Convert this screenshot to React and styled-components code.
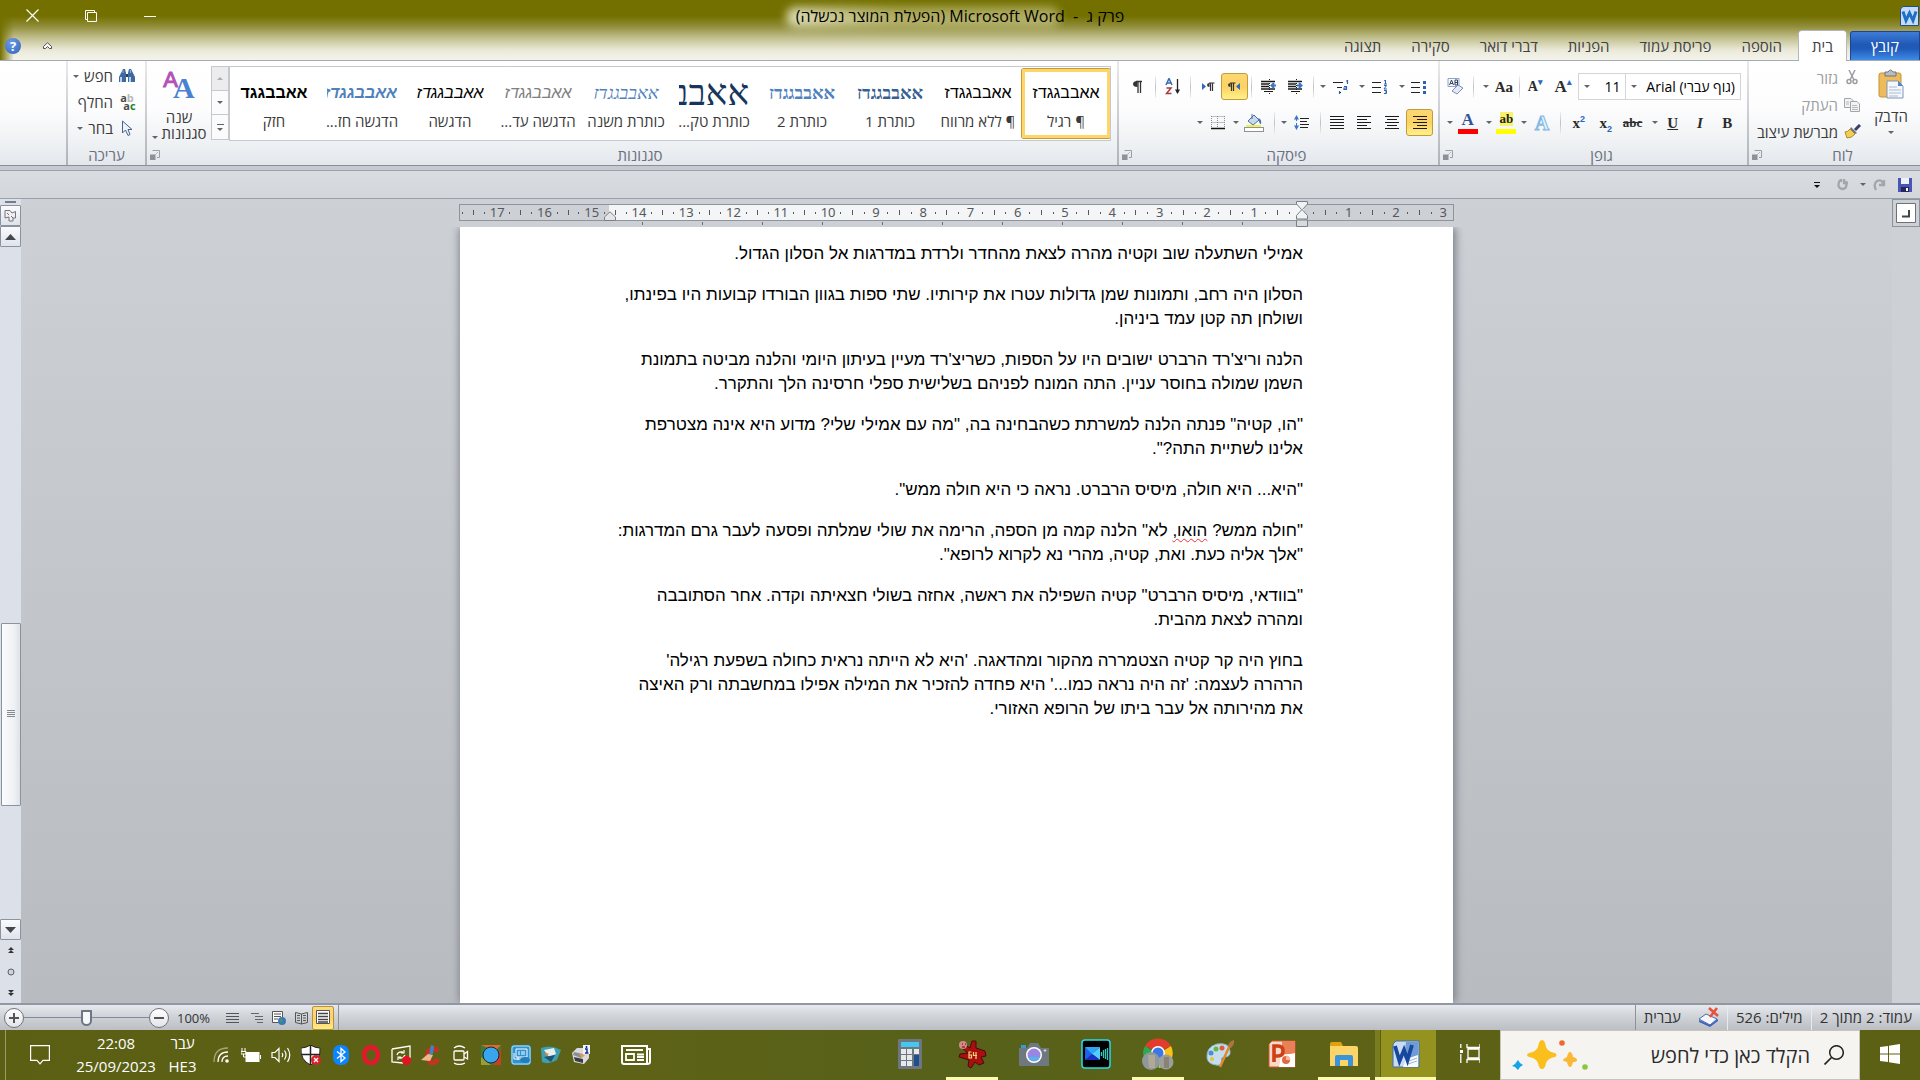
import React from "react";
import styled, { createGlobalStyle, css } from "styled-components";

const ui = `"Open Sans", "Noto Sans", "DejaVu Sans", sans-serif`;
const tahoma = `"Noto Sans", "Open Sans", "DejaVu Sans", sans-serif`;
const sans = `"Liberation Sans", Arial, sans-serif`;
const serif = `"Liberation Serif", "Times New Roman", serif`;

const Global = createGlobalStyle`
  * { box-sizing: border-box; }
  body { margin: 0; overflow: hidden; font-family: ${ui}; }
  button, select, input { font: inherit; color: inherit; border: 0; background: none; padding: 0; margin: 0; }
  svg { display: block; direction: ltr; flex: none; }
`;

const App_ = styled.div`
  height: 100vh;
  display: flex;
  flex-direction: column;
  font-size: 15px;
  color: #3b3b3b;
  white-space: nowrap;
`;

/* ---------- window frame ---------- */
const Frame = styled.header`
  background:
    linear-gradient(to right, #737000 0, rgba(115, 112, 0, 0) 14px),
    linear-gradient(#737000 0, #737000 16px, #8f8c37 26px, #c2c08f 38px, #eae9d8 50px, #f5f4ec 60px);
  border-bottom: 1px solid #a5abb3;
`;
const TitleBar = styled.div`
  height: 31px;
  display: grid;
  grid-template-columns: 1fr auto 1fr;
  align-items: center;
`;
const AppIcon = styled.div`
  padding: 0 1px;
  display: flex;
`;
const Title = styled.h1`
  position: relative;
  z-index: 0;
  margin: 0;
  font-family: ${ui};
  font-weight: 400;
  font-size: 16px;
  line-height: 24px;
  color: #000;
  &::before {
    content: "";
    position: absolute;
    z-index: -1;
    inset: 3px 64px 1px -10px;
    border-radius: 10px;
    background: linear-gradient(to right, rgba(255, 255, 240, 0.75), rgba(235, 232, 190, 0.5) 40%);
    filter: blur(5px);
  }
`;
const WindowButtons = styled.div`
  display: flex;
  justify-content: flex-end;
  padding-left: 3px;
`;
const WinBtn = styled.button`
  width: 59px;
  height: 31px;
  display: grid;
  place-items: center;
  &:last-child { width: 58px; }
`;
const TabRow = styled.nav`
  height: 29px;
  display: flex;
  align-items: stretch;
`;
const FileTab = styled.button`
  width: 70px;
  margin-left: 4px;
  color: #fff;
  border: 1px solid #1c468f;
  border-bottom: 0;
  border-radius: 3px 0 0 0;
  background: linear-gradient(#3f7bd8, #2059b5 45%, #1f5abb 60%, #3f8be6);
`;
const Tab = styled.button`
  padding: 0 13px;
  margin-left: 4px;
  color: #3f4247;
  ${(p) => p.$on && css`
    background: #fff;
    box-shadow: 0 1px 0 #fff, -1px 0 0 #b4b8be, 1px 0 0 #b4b8be, 0 -1px 0 #b4b8be;
    border-radius: 3px 3px 0 0;
  `}
`;
const TabEnd = styled.div`
  margin-right: auto;
  display: flex;
  align-items: center;
  gap: 22px;
  padding-left: 5px;
`;
const Help = styled.button`
  width: 16px;
  height: 16px;
  border-radius: 50%;
  color: #fff;
  font-weight: 700;
  font-size: 13px;
  line-height: 16px;
  background: radial-gradient(circle at 40% 30%, #6d9be6, #2f62b9);
`;

/* ---------- ribbon ---------- */
const Ribbon = styled.section`
  height: 105px;
  display: flex;
  background: linear-gradient(#fff 0, #fdfdfe 45%, #eceff2 85%, #e3e6ea 100%);
  border-bottom: 1px solid #8b9097;
`;
const Group = styled.section`
  ${(p) => (p.$w ? `width: ${p.$w}px;` : "flex: 1; min-width: 0;")}
  border-left: 2px solid;
  border-image: linear-gradient(#e8eaec, #aeb3b9) 1;
  display: flex;
  flex-direction: column;
`;
const GroupBody = styled.div`
  flex: 1;
  display: flex;
  padding: ${(p) => p.$pad || "5px 6px 0"};
  flex-direction: ${(p) => (p.$col ? "column" : "row")};
`;
const GroupFoot = styled.footer`
  height: 20px;
  display: grid;
  grid-template-columns: 1fr ${(p) => (p.$launch ? "16px" : "0")};
  align-items: center;
  justify-items: center;
  color: #6a7080;
  line-height: 20px;
`;
const ToolRow = styled.div`
  height: 27px;
  margin-top: ${(p) => p.$top || 0}px;
  display: flex;
  align-items: stretch;
`;
const Tool = styled.button`
  width: ${(p) => p.$w || 28}px;
  display: grid;
  place-items: center;
  color: #222;
  ${(p) => p.$on && css`
    border: 1px solid #c29b3d;
    border-radius: 3px;
    background: linear-gradient(#fbd873, #fdd264 50%, #fff08a);
  `}
`;
const Gap = styled.span`
  width: ${(p) => p.$w}px;
`;
const SepBox = styled.span`
  width: ${(p) => p.$w || 8}px;
  display: grid;
  place-items: center;
  &::before {
    content: "";
    width: 1px;
    height: 22px;
    background: linear-gradient(#eceef0, #bfc3c9, #eceef0);
  }
`;
const CaretBtn = styled.button`
  width: 8px;
  display: grid;
  place-items: center;
`;
const Tri = styled.i`
  display: inline-block;
  border: 3px solid transparent;
  border-top-color: #62666c;
  border-bottom: 0;
`;
const Glyph = styled.span`
  direction: ltr;
  font-family: ${serif};
  font-weight: 700;
  font-size: ${(p) => p.$s || 16}px;
  line-height: 18px;
  color: ${(p) => p.$c || "#2c2c2c"};
  font-style: ${(p) => (p.$i ? "italic" : "normal")};
  text-decoration: ${(p) => p.$d || "none"};
  sup, sub { font-size: 9px; line-height: 0; color: #2e67b8; font-family: ${sans}; }
`;
const Effect = styled(Glyph)`
  -webkit-text-stroke: 1px #7db8e2;
`;
const ColorBar = styled.span`
  display: grid;
  justify-items: center;
  border-bottom: 5px solid ${(p) => p.$c};
  width: 20px;
  line-height: 18px;
`;
const HiText = styled.span`
  direction: ltr;
  background: #f7f16b;
  font-family: ${serif};
  font-weight: 700;
  font-size: 13px;
  line-height: 14px;
  margin-bottom: 3px;
`;
const Combo = styled.label`
  width: ${(p) => p.$w}px;
  border: 1px solid #d2d5d9;
  margin-right: ${(p) => (p.$join ? -1 : 0)}px;
  background: #fff;
  display: flex;
  align-items: center;
  select {
    appearance: none;
    flex: 1;
    min-width: 0;
    font-family: ${ui};
    font-size: 14px;
    color: #000;
    padding: 0 5px;
    outline: 0;
  }
  i { margin-left: 5px; }
`;
const PasteBtn = styled.button`
  width: 46px;
  height: 76px;
  display: flex;
  flex-direction: column;
  align-items: center;
  line-height: 20px;
  svg { margin: 5px 0 7px; }
  i { margin-top: 5px; }
`;
const Commands = styled.div`
  flex: 1;
  display: flex;
  flex-direction: column;
  align-items: flex-start;
  padding-right: ${(p) => p.$pr || 0}px;
`;
const Command = styled.button`
  height: ${(p) => p.$h || 27}px;
  display: flex;
  align-items: center;
  gap: 5px;
  color: ${(p) => (p.$off ? "#9b9ea3" : "#3b3b3b")};
`;
const IconBox = styled.span`
  width: 18px;
  display: grid;
  place-items: center;
`;
const Gallery = styled.div`
  flex: 1;
  min-width: 0;
  height: 75px;
  border: 1px solid #c5c8cd;
  background: #fff;
  display: flex;
  overflow: hidden;
`;
const StyleItem = styled.button`
  flex: 1;
  min-width: 0;
  margin: 2px 0;
  border: 3px solid transparent;
  border-radius: 2px;
  display: flex;
  flex-direction: column;
  align-items: center;
  ${(p) => p.$on && css`
    border-color: #fdd568;
    box-shadow: inset 0 0 0 1px #fff, 0 0 0 1px #c6993a;
  `}
`;
const Preview = styled.span`
  width: 70px;
  height: 40px;
  line-height: 42px;
  overflow: hidden;
  font-family: ${(p) => (p.$serif ? serif : sans)};
  font-size: ${(p) => p.$s || 16}px;
  font-weight: ${(p) => (p.$b ? 700 : 400)};
  font-style: ${(p) => (p.$i ? "italic" : "normal")};
  color: ${(p) => p.$c || "#000"};
`;
const StyleName = styled.span`
  line-height: 18px;
`;
const GalleryNav = styled.div`
  width: 18px;
  height: 74px;
  display: grid;
  grid-template-rows: 1fr 1fr 1fr;
`;
const NavBtn = styled.button`
  border: 1px solid #c5c8cd;
  background: ${(p) => (p.$off ? "#ececee" : "#fbfbfc")};
  display: grid;
  place-items: center;
  align-content: center;
  gap: 3px;
  &:not(:first-child) { border-top: 0; }
  ${(p) => p.$more && css`&::before { content: ""; width: 7px; height: 1px; background: #62666c; }`}
`;
const ChangeStyles = styled.button`
  width: 64px;
  display: flex;
  flex-direction: column;
  align-items: center;
  line-height: 16px;
`;
const BigAA = styled.span`
  direction: ltr;
  height: 43px;
  display: flex;
  padding-top: 3px;
  font-family: ${serif};
  b:first-child { font-size: 22px; line-height: 22px; color: #b351b8; font-family: ${sans}; -webkit-text-stroke: 1px #b351b8; font-weight: 400; }
  b:last-child { font-size: 30px; line-height: 38px; color: #4b82cf; margin-left: -5px; font-weight: 700; }
`;
const RibbonEdge = styled.div`
  height: 5px;
  background: #c6cad0;
  border-bottom: 1px solid #9aa2b0;
`;
const Quick = styled.div`
  height: 28px;
  display: flex;
  align-items: center;
  padding: 0 6px;
  background: linear-gradient(#d9dce1, #d3d6db);
  border-bottom: 1px solid #98a1af;
`;

/* ---------- workspace ---------- */
const Work = styled.main`
  flex: 1;
  min-height: 0;
  display: flex;
  background: linear-gradient(#cdd0d5, #b8bbc0);
`;
const VRuler = styled.div`
  width: 28px;
  background: #cdd0d5;
`;
const TabPick = styled.button`
  width: 28px;
  height: 28px;
  border: 1px solid #8d939c;
  display: grid;
  place-items: center;
  background: #cdd0d5;
`;
const Desk = styled.div`
  flex: 1;
  min-width: 0;
  display: flex;
  flex-direction: column;
  align-items: center;
  overflow: hidden;
`;
const RulerBar = styled.div`
  width: 995px;
  padding-top: 5px;
  height: 28px;
`;
const Ruler = styled.div`
  height: 17px;
  border: 1px solid #8f949c;
  overflow: hidden;
  background: linear-gradient(to left, #cdd0d5 15%, #f4f5f6 15%, #f4f5f6 85%, #cdd0d5 85%);
`;
const Scale = styled.div`
  display: flex;
  margin-right: -8px;
  width: 100%;
`;
const Cm = styled.span`
  flex: 0 0 calc(100% / 21);
  display: grid;
  grid-template-columns: repeat(4, 1fr);
  place-items: center;
  height: 15px;
  font-family: ${tahoma};
  font-size: 13px;
  line-height: 15px;
  color: #55585e;
`;
const Dot = styled.i`
  width: 1px;
  height: ${(p) => (p.$bar ? 5 : 2)}px;
  background: #55585e;
`;
const Stops = styled.div`
  height: 3px;
  margin: 1px 152px 0 150px;
  background: repeating-linear-gradient(to left, transparent 0, transparent 59px, #6c7179 59px, #6c7179 60px);
`;
const Marker = styled.svg`
  position: absolute;
  top: ${(p) => p.$top}px;
  ${(p) => p.$side}
`;
const RulerWrap = styled.div`
  position: relative;
`;
const Page = styled.article`
  flex: 1;
  width: 993px;
  padding: 15px 150px 0;
  background: #fff;
  box-shadow: -2px 0 8px -1px #858a92, 4px 0 8px -1px #858a92;
  color: #000;
  font-family: ${sans};
  font-size: 17px;
  line-height: 24px;
  clip-path: inset(0 -20px);
  p { margin: 0 0 17px; }
  u { text-decoration: underline wavy #e33 1px; text-underline-offset: 2px; }
`;
const Scroll = styled.aside`
  width: 21px;
  display: flex;
  flex-direction: column;
  background: #dce0e8;
`;
const SBtn = styled.button`
  height: ${(p) => p.$h || 21}px;
  border: ${(p) => (p.$flat ? 0 : "1px solid #8b93a1")};
  border-radius: 1px;
  background: ${(p) => (p.$flat ? "none" : "linear-gradient(#fafbfd, #dfe3ea)")};
  display: grid;
  place-items: center;
`;
const Split = styled.div`
  height: 6px;
  padding: 2px 5px;
  &::before { content: ""; display: block; height: 2px; background: #777c85; }
`;
const Track = styled.div`
  flex: 1;
  display: flex;
  flex-direction: column;
`;
const Space = styled.div`
  flex: ${(p) => p.$f};
`;
const Thumb = styled.div`
  flex: 181;
  width: 20px;
  border: 1px solid #8b93a1;
  border-radius: 1px;
  background: linear-gradient(to right, #fbfcfd, #eef0f3 70%, #dfe2e6);
  display: grid;
  place-items: center;
`;

/* ---------- status bar ---------- */
const Status = styled.footer`
  height: 27px;
  display: flex;
  align-items: stretch;
  border-top: 2px solid #9297a4;
  background: linear-gradient(#e6e9ee, #d2d5da 40%, #bbbfc4);
  font-family: ${ui};
  font-size: 15px;
  line-height: 22px;
  color: #333;
`;
const Stat = styled.button`
  padding: 0 8px 2px;
  display: flex;
  align-items: center;
  gap: 17px;
  border-left: 1px solid #8d929a;
  box-shadow: 1px 0 0 #e8eaee;
`;
const Views = styled.div`
  margin-right: auto;
  display: flex;
  align-items: center;
  padding-right: 4px;
  border-right: 1px solid #8d929a;
`;
const ViewBtn = styled.button`
  width: 22px;
  height: 24px;
  display: grid;
  place-items: center;
  ${(p) => p.$on && css`
    border: 1px solid #b8913a;
    border-radius: 2px;
    background: linear-gradient(#fbdc85, #fdd264 50%, #ffe98a);
  `}
`;
const ZoomBox = styled.div`
  display: flex;
  align-items: center;
  padding-left: 4px;
  direction: ltr;
`;
const Round = styled.button`
  width: 20px;
  height: 20px;
  border: 1px solid #6f747c;
  border-radius: 50%;
  background: linear-gradient(#fff, #e2e4e8);
  display: grid;
  place-items: center;
`;
const Slider = styled.input`
  width: 125px;
  height: 18px;
  appearance: none;
  background: linear-gradient(#7e8b9c, #7e8b9c) center / 100% 1px no-repeat;
  &::-webkit-slider-thumb {
    appearance: none;
    width: 11px;
    height: 16px;
    background: #f7f8fa;
    border: 2px solid #6d7683;
    border-radius: 1px 1px 6px 6px;
  }
`;
const Percent = styled.output`
  width: 52px;
  padding-left: 8px;
  font-size: 13px;
`;

/* ---------- task bar ---------- */
const Taskbar = styled.footer`
  height: 50px;
  display: flex;
  background: linear-gradient(to right, #5a5f13, #5e6216 30%, #57611a 50%, #5e6216 70%, #5c6014);
  color: #fff;
`;
const TaskBtn = styled.button`
  width: ${(p) => p.$w || 62}px;
  display: grid;
  place-items: center;
  position: relative;
  padding-bottom: 2px;
  background: ${(p) => (p.$active ? "#94931f" : "none")};
  ${(p) => p.$active && "box-shadow: inset 5px 0 0 #7b7c20, inset 6px 0 0 #5a5f13;"}
  ${(p) => p.$run && css`
    &::after {
      content: "";
      position: absolute;
      bottom: 0;
      left: ${p.$active ? 0 : 5}px;
      right: ${p.$active ? 0 : 5}px;
      height: 3px;
      background: #fdfbb2;
    }
  `}
`;
const Search = styled.label`
  width: 360px;
  padding: 0 15px 0 11px;
  border: 1px solid #c6c5b8;
  background: #f5f4f1;
  display: flex;
  align-items: center;
  gap: 14px;
  input {
    flex: 1;
    min-width: 0;
    font-size: 20px;
    outline: 0;
    &::placeholder { color: #2b2b2b; opacity: 1; }
  }
`;
const Tray = styled.div`
  margin-right: auto;
  display: flex;
`;
const TrayBtn = styled.button`
  width: ${(p) => p.$w || 30}px;
  display: grid;
  place-items: center;
`;
const TwoLine = styled.button`
  width: ${(p) => p.$w}px;
  font-size: 15px;
  line-height: 23px;
  text-align: center;
`;
const Peek = styled.button`
  width: 6px;
  border-right: 1px solid #9a9c6a;
`;

/* ---------- drawings ---------- */
const Svg = ({ w = 18, h = w, vb, children }) => (
  <svg width={w} height={h} viewBox={vb || `0 0 ${w} ${h}`} fill="none" aria-hidden="true">{children}</svg>
);
const Lines = ({ rows, c = "#1b1b1b", w = 16, sw = 1 }) => (
  <Svg w={w} h={rows.length * 3}>
    {rows.map(([a, b], i) => <path key={i} d={`M${a} ${i * 3 + 1.5}H${b}`} stroke={c} strokeWidth={sw} />)}
  </Svg>
);
const Launcher = () => (
  <Svg w={10}><path d="M2.500 0.500H9.500V7.500H7" stroke="#9a9ea5" /><path d="M0 4.500H5.500V10H0Z" fill="#8d9198" /><path d="M5 5L8 2" stroke="#b4b7bc" /></Svg>
);
const WordLogo = ({ s }) => (
  <Svg w={s} vb="0 0 28 28">
    <path d="M4 1H27V27H1V4Z" fill="#c9dcf3" stroke="#3f6dad" />
    <path d="M14 2H26V18H12Z" fill="#6f9bd6" />
    <path d="M14 19L26 15V27H11Z" fill="#f7fafd" />
    <path d="M17 21L25 18M16 24L25 21" stroke="#9ab5d8" />
    <path d="M3 6L7.500 21L12 10L15.500 20L20 5" stroke="#17489d" strokeWidth="3.800" />
  </Svg>
);
const SmallWord = () => (
  <Svg w={19} h={20}>
    <path d="M3 .5H18.500V19.500H.5V3Z" fill="#c7dcf4" stroke="#1f4f92" />
    <path d="M3 5.500L6 14.500L9.500 7L13 14.500L16 5.500" stroke="#1b6fc8" strokeWidth="3" />
  </Svg>
);
const Clipboard = () => (
  <Svg w={26} h={30}>
    <rect x="1" y="4" width="22" height="24" rx="2" fill="#eebb5c" stroke="#c9913a" />
    <path d="M7 7V3H10Q12.500-1 15 3H18V7Z" fill="#b9bcc2" stroke="#6f747c" />
    <path d="M9 12H20L25 17V29H9Z" fill="#f4f8fd" stroke="#7f95b5" />
    <path d="M20 12V17H25Z" fill="#4d86cf" />
    <path d="M11 18H19M11 21H23M11 24H23M11 27H20" stroke="#a9bbd5" />
  </Svg>
);
const Scissors = () => (
  <Svg w={12} h={15}>
    <path d="M3 0L8 10M9 0L4 10" stroke="#9a9da2" strokeWidth="1.500" />
    <circle cx="3" cy="11.500" r="2" stroke="#9a9da2" strokeWidth="1.500" /><circle cx="9" cy="11.500" r="2" stroke="#9a9da2" strokeWidth="1.500" />
  </Svg>
);
const Copy = () => (
  <Svg w={16} h={14}>
    <path d="M.5.5H7L9.500 3V9.500H.5Z" fill="#f3f3f3" stroke="#a2a5aa" /><path d="M6.500 3.500H13L15.500 6V13.500H6.500Z" fill="#f3f3f3" stroke="#a2a5aa" />
    <path d="M8 7.500H13M8 9.500H14M8 11.500H14M2 4H5M2 6H5" stroke="#b5b8bc" />
  </Svg>
);
const Brush = () => (
  <Svg w={17} h={15}>
    <path d="M16 1L11 6" stroke="#3b3f66" strokeWidth="3" /><path d="M7 3L13 9L11 10L6 5Z" fill="#6c7487" />
    <path d="M6 5L11 10Q8 14 3 14L1 8Q4 8 6 5Z" fill="#f0cf57" stroke="#b08a2c" />
  </Svg>
);
const Binoculars = () => (
  <Svg w={16} h={14}>
    <path d="M2 4L4 0H6L7 4V13H0V8Z" fill="#3f689f" /><path d="M14 4L12 0H10L9 4V13H16V8Z" fill="#3f689f" />
    <path d="M7 5H9V8H7Z" fill="#1d3f6e" /><path d="M2 8V13M11 8V13" stroke="#b7d0ef" strokeWidth="2" /><path d="M4 1V4M11.500 1V4" stroke="#8fb1de" />
  </Svg>
);
const ReplaceBox = styled.span`
  direction: ltr;
  font-size: 11px;
  line-height: 8px;
  font-weight: 700;
  color: #4b4b4b;
  em { font-style: normal; color: #b9b9b9; }
  i { font-style: normal; color: #158a1c; }
  span { display: block; padding-left: 5px; }
`;
const Pointer = () => (
  <Svg w={12} h={17}><path d="M1.500 1V13L4.500 10L7 15.500L9 14.500L7 9.500H11Z" fill="#eef3fb" stroke="#4a628c" /></Svg>
);
const Listing = ({ mode }) => (
  <Svg w={16} h={14}>
    {[2, 7, 12].map((y, i) => (
      <g key={y}>
        <path d={mode === "multi" ? `M${[0, 4, 7][i]} ${y}.5H${[10, 9, 8][i]}` : `M0 ${y}.5H9`} stroke="#222" />
        {mode === "dots" && <rect x="12" y={y - 1} width="3" height="3" fill="#2e62b0" />}
        {mode === "nums" && <path d={["M12 1L13.500 0V4M12 4H15", "M12 5.500H14.500L12 9H15", "M12 10.500H14.500V13.500H12M13 12H14.500"][i]} stroke="#2e62b0" />}
      </g>
    ))}
    {mode === "multi" && <path d="M14.500 0V4M13 1H15M11 6.500H13.500V9.500H11V8H13.500M6.500 11V14" stroke="#2e62b0" strokeWidth="1.200" />}
  </Svg>
);
const Indent = ({ out }) => (
  <Svg w={16} h={15}>
    <path d="M1 2.500H15M1 5H9M1 7.500H9M1 10H15" stroke="#1b1b1b" strokeWidth="1.500" />
    <path d="M9.500 0V15" stroke="#1b1b1b" strokeDasharray="1 1" /><path d="M4 12.500H13" stroke="#1b1b1b" />
    {out ? <path d="M16 6.500H12M14 4L11.500 6.500L14 9" stroke="#3b74c9" strokeWidth="2" /> : <path d="M10 6.500H14M12 4L14.500 6.500L12 9" stroke="#3b74c9" strokeWidth="2" />}
  </Svg>
);
const Dir = ({ rtl }) => (
  <Svg w={14} h={10}>
    {rtl ? <path d="M13 1V8L9 4.500Z" fill="#2f67bd" /> : <path d="M1 1V8L5 4.500Z" fill="#2f67bd" />}
    <g transform={rtl ? "translate(0 0)" : "translate(5 0)"}>
      <path d="M3.500 1V5Q1 5 1 3T3.500 1Z" fill="#333" /><path d="M3 1H8.500M4.500 1V9M6.500 1V9" stroke="#333" strokeWidth="1.200" />
    </g>
  </Svg>
);
const Pilcrow = () => (
  <Svg w={11} h={13}><path d="M5.500 1V7Q1 7 1 4T5.500 1Z" fill="#333" /><path d="M4 1.500H10M6 1V13M8.500 1V13" stroke="#333" strokeWidth="1.300" /></Svg>
);
const Sort = () => (
  <Svg w={16} h={17}>
    <path d="M1 7L4 0.500L7 7M2 5H6" stroke="#3767b3" strokeWidth="1.500" /><path d="M1.500 10H6L1.500 15.500H6.500" stroke="#a43c3c" strokeWidth="1.500" />
    <path d="M12.500 1V15" stroke="#222" strokeWidth="1.300" /><path d="M10 11.500H15L12.500 16Z" fill="#222" />
  </Svg>
);
const Spacing = () => (
  <Svg w={16} h={15}>
    <path d="M6 3.500H15M6 6.500H13M6 9.500H15M6 12.500H14" stroke="#222" />
    <path d="M2.500 3V12" stroke="#3b74c9" strokeDasharray="3 2" /><path d="M0 4.500L2.500 0L5 4.500ZM0 10.500L2.500 15L5 10.500Z" fill="#3b74c9" />
  </Svg>
);
const Bucket = () => (
  <Svg w={20} h={18}>
    <path d="M4 7L10 1L15 6L9 11Z" fill="#c8d8ee" stroke="#4f6f9f" /><path d="M8 5V0" stroke="#4f6f9f" /><path d="M14 4Q18 5 17 10Q15 10 15 6Z" fill="#3c6fb8" />
    <path d="M2 12H17" stroke="#f1ee1c" strokeWidth="1.500" /><rect x=".5" y="13.500" width="19" height="4" fill="#fff" stroke="#8d9198" />
  </Svg>
);
const Borders = () => (
  <Svg w={14} h={14}><path d="M.5.5H13.500M.5 6.500H13.500M.5 0V12M6.500 0V12M13.500 0V12" stroke="#8b8b8b" strokeDasharray="1 1" /><path d="M0 12.500H14" stroke="#111" strokeWidth="1.500" /></Svg>
);
const ClearFmt = () => (
  <Svg w={17} h={18}>
    <path d="M1 .5H12V8.500H1Z" fill="#f5f8fd" stroke="#8fa4c8" /><path d="M2.500 7L4.500 2L6.500 7M3.500 5.500H6M8 2V7H10.500V2H8M8 4.500H10" stroke="#34405c" />
    <path d="M5 13L11 7L16 10L10 16Z" fill="#e4ebf7" stroke="#7b8fb5" />
  </Svg>
);
const Floppy = () => (
  <Svg w={14}><path d="M0 0H14V14H0Z" fill="#4a55b5" /><path d="M3 0H11V6H3Z" fill="#eef2fb" /><path d="M3 9H11V14H3Z" fill="#23285e" /><path d="M8 10H10V13H8Z" fill="#fff" /></Svg>
);
const Turn = ({ flip }) => (
  <Svg w={13} h={13}><path d={flip ? "M4 2Q0 9 6 11Q12 11 10 3M8 1V5H12M5 1V4" : "M3 12Q0 6 4 3Q9 1 10 6M11 2V7H6"} stroke="#a3a6ab" strokeWidth="2.300" /></Svg>
);
const Proof = () => (
  <Svg w={21} h={20}>
    <path d="M1 12L8 7L19 12L12 18Z" fill="#f4f6fb" stroke="#4868b5" /><path d="M1 13V15L12 20L20 14V12L12 18Z" fill="#3f62bb" />
    <path d="M11 1L20 9M19 1L12 10" stroke="#e9503a" strokeWidth="2.500" />
  </Svg>
);

const TaskIcons = {
  files: <Svg w={28} h={24}><path d="M0 2Q0 0 2 0H11L13 4H0Z" fill="#e0a010" /><path d="M0 4H26Q28 4 28 6V24H0Z" fill="#fbd567" /><path d="M5 24V15Q5 13 7 13H21Q23 13 23 15V24H18V18H10V24Z" fill="#3a94dc" /></Svg>,
  ppt: <Svg w={28}><path d="M4 1H27V27H1V4Z" fill="#f9d9c8" stroke="#d2562c" /><path d="M14 1H27V14H14Z" fill="#e98058" /><path d="M13 16L27 13V27H11Z" fill="#fff" /><circle cx="18" cy="20" r="4" fill="#e26842" /><path d="M18 20V15.500A4.500 4.500 0 0 1 22.500 20Z" fill="#f8b7a0" /><path d="M6 22V6H10Q15 6 15 11T10 16H7" stroke="#cf3f16" strokeWidth="3.600" /></Svg>,
  paint: <Svg w={30}><path d="M2 19Q1 8 12 5Q24 3 25 12Q26 18 19 18Q15 19 17 23Q17 27 11 26Q3 25 2 19Z" fill="#c5dcec" stroke="#8fb3cc" /><circle cx="6" cy="14" r="2.500" fill="#4b8fd0" /><circle cx="11" cy="10" r="2.500" fill="#67b544" /><circle cx="17" cy="9" r="2.500" fill="#e05b38" /><circle cx="7" cy="20" r="2" fill="#e7c43a" /><path d="M25 6L15 28" stroke="#dd8a2e" strokeWidth="2.500" /><path d="M23 7Q24 2 29 1Q30 5 26 9Z" fill="#a8773e" /></Svg>,
  chrome: <Svg w={32}><path d="M16 14L3 8A15 15 0 0 1 29 8Z" fill="#e33b2e" /><path d="M16 16L29 8A15 15 0 0 1 17 30Z" fill="#fbc116" /><path d="M16 16L17 30A15 15 0 0 1 3 8Z" fill="#2da94f" /><circle cx="16" cy="15" r="7" fill="#fff" /><circle cx="16" cy="15" r="5.500" fill="#3b78e7" /><circle cx="9" cy="23" r="9" fill="#8f989d" /><path d="M6 17H13V30H7Z" fill="#b1a896" /><circle cx="24" cy="24" r="7.500" fill="#9a9f9d" /><path d="M22 19H27V30H22Z" fill="#8b8274" /></Svg>,
  video: <Svg w={30}><rect x="1" y="1" width="28" height="28" rx="3" fill="#000" stroke="#29dbe6" strokeWidth="1.500" /><path d="M4 8L15 14L4 21Z" fill="#1f63e0" /><path d="M4 8H19L11 15Z" fill="#2fa4ff" /><path d="M19 8V21L11 15Z" fill="#53cdfc" /><path d="M4 21L11 15L19 21Z" fill="#1a2ec8" /><path d="M20.500 13V17M22.500 11V19M24.500 10V20M26.500 9V21" stroke="#35c7bd" strokeWidth="1.300" /></Svg>,
  camera: <Svg w={30} h={24}><path d="M2 3H7V6H2Z" fill="#2aa0dc" /><path d="M0 6H8L11 1H19L22 6H30V24H0Z" fill="#6f777f" /><circle cx="15" cy="13" r="8" fill="#fff" /><circle cx="15" cy="13" r="6.500" fill="#9a86e2" /><path d="M9 15A6.500 6.500 0 0 0 21 15Z" fill="#53b5e8" /><path d="M26 7V10M24.500 8.500H27.500" stroke="#cfd3d7" /></Svg>,
  bug: <Svg w={30}><path d="M4 3L8 6L13 9L15 2H19V9L28 12L29 17L24 18L27 24L22 26L18 23L14 29L11 27L12 21L2 18L3 15L11 14L6 10Z" fill="#a80f0f" stroke="#4c0a0a" /><circle cx="6" cy="6" r="4" fill="#d98888" /><path d="M5 5H6M8 5H9M5 8H8" stroke="#4c0a0a" /><path d="M14.500 13H12V19H14.500V16H12.500M16.500 13V16.500H20M19 13V20" stroke="#ffd27a" strokeWidth="1.200" /></Svg>,
  calc: <Svg w={24} h={30}><rect width="24" height="30" rx="1" fill="#6e7681" /><path d="M3 3H21V8H3Z" fill="#45c8f0" /><path d="M3 10H8V15H3ZM9 10H14V15H9ZM16 10H21V15H16ZM3 16H8V21H3ZM9 16H14V21H9ZM3 22H8V27H3ZM9 22H14V27H9Z" fill="#e6e8ea" /><path d="M16 16H21V27H16Z" fill="#1d4f90" /></Svg>,
};

const TrayIcons = [
  ["הדפסה", <Svg w={20}><path d="M1 8L6 3H18V13L13 19L3 17Z" fill="#d9dbde" /><path d="M3 12L12 14V18L4 16Z" fill="#3b3e42" /><path d="M3 7L12 9L10 13L2 10Z" fill="#8b8f94" /><path d="M8 9L14 10L11 13Z" fill="#ec9a3d" /><rect x="12" width="7" height="9" fill="#f0f4ff" /><path d="M15.500 1V3M14 4H16V8M14 8H17.500" stroke="#15288f" strokeWidth="1.500" /></Svg>],
  ["כונן", <Svg w={20}><path d="M0 3Q10-1 20 5L16 15Q8 20 1 17Z" fill="#3f9fb0" /><path d="M3 5L13 3L15 9L8 12Z" fill="#e9eff2" /><path d="M3 12L14 10L10 17Z" fill="#1f5570" /><path d="M4 7L8 9L5 11Z" fill="#ef8a3a" /></Svg>],
  ["אינטל", <Svg w={20}><rect width="20" height="20" rx="3" fill="#2f93cf" /><rect x="1" y="1" width="18" height="18" rx="2" stroke="#b7e2f7" /><path d="M5 4H16V12H5ZM7 12V15M3 8V14H10M8 6V10M11 6V10M13 6V10" stroke="#fff" /><ellipse cx="14" cy="15" rx="5" ry="3" fill="#1f7fc0" /></Svg>],
  ["דפדפן", <Svg w={20}><path d="M0 0H20V20H0Z" fill="#3f7a3a" /><path d="M0 0H20L14 6Z" fill="#e06a2b" /><path d="M20 3V20H12Z" fill="#c8401f" /><path d="M0 12V20H10Z" fill="#9ba02d" /><circle cx="10" cy="10" r="8" fill="#39a5ec" stroke="#132a3c" /></Svg>],
  ["פגישה", <Svg w={20}><rect x="3" y="6" width="10" height="9" rx="1" stroke="#fff" strokeWidth="1.300" /><path d="M13 9L16.500 6.500V14L13 12M3 3Q8-1 14 3M3 18Q8 21 14 18" stroke="#fff" strokeWidth="1.300" /></Svg>],
  ["ניקוי", <Svg w={20}><path d="M17 6Q13 2 9 5T8 15T17 14" stroke="#c23422" strokeWidth="5" /><path d="M10 0L13 1L12 9L8 10Z" fill="#3b86c9" /><path d="M7 9L12 10L9 16L0 15Z" fill="#efb88c" /></Svg>],
  ["עדכון", <Svg w={20}><path d="M1 4L19 1V13M1 4V17L12 18" stroke="#fff" strokeWidth="1.300" /><path d="M6 10Q7 6 12 7M13 5V8H10M14 10Q12 14 8 13M7 15V12H10" stroke="#fff" strokeWidth="1.200" /><circle cx="15.500" cy="15.500" r="4.500" fill="#e81123" /></Svg>],
  ["אופרה", <Svg w={20}><ellipse cx="10" cy="10" rx="7" ry="8" stroke="#e3182d" strokeWidth="4.500" /></Svg>],
  ["בלוטות'", <Svg w={16} h={20}><rect width="16" height="20" rx="7" fill="#0a84ff" /><path d="M4 6.500L12 13L8 16.500V3.500L12 7L4 13.500" stroke="#fff" strokeWidth="1.300" /></Svg>],
  ["אבטחה", <Svg w={20}><path d="M9.500 0Q14 3 19 3Q20 15 9.500 20Q-1 15 0 3Q5 3 9.500 0Z" fill="#fff" stroke="#222" /><path d="M9.500 0V20M0 9.500H19" stroke="#222" strokeWidth="1.500" /><circle cx="15" cy="15" r="5" fill="#d8232e" /><path d="M13 13L17 17M17 13L13 17" stroke="#fff" strokeWidth="1.300" /></Svg>],
  ["עוצמת קול", <Svg w={20} h={18}><path d="M1 6.500H4L8 2.500V15.500L4 11.500H1Z" stroke="#fff" strokeWidth="1.200" /><path d="M11 7Q12.500 9 11 11M13.500 4.500Q16.500 9 13.500 13.500M16.500 2Q21 9 16.500 16" stroke="#fff" strokeWidth="1.200" /></Svg>],
  ["סוללה", <Svg w={20} h={15}><rect x="5" y="4.500" width="13" height="9" fill="#fff" stroke="#fff" /><path d="M19.500 7V11M1 0V3M4 0V3M0 3.500H5V6H0ZM2.500 6V9H5" stroke="#fff" /></Svg>],
  ["רשת", <Svg w={17} h={16}><circle cx="14" cy="14" r="1.800" fill="#fff" /><path d="M9 15Q9 9 15 9M5 15Q5 5 15 5" stroke="#fff" strokeWidth="1.300" /><path d="M1 15Q1 1 15 1" stroke="#a6a878" strokeWidth="1.300" /></Svg>],
];

/* ---------- data ---------- */
const tabs = ["הוספה", "פריסת עמוד", "הפניות", "דברי דואר", "סקירה", "תצוגה"];
const sample = "אאבבגגדז";
const styles = [
  { name: "¶ רגיל", on: true },
  { name: "¶ ללא מרווח" },
  { name: "כותרת 1", serif: true, b: true, c: "#365f91", s: 18 },
  { name: "כותרת 2", serif: true, b: true, c: "#4f81bd", s: 18 },
  { name: "כותרת טק...", serif: true, c: "#17365d", s: 36, text: "אאבב" },
  { name: "כותרת משנה", serif: true, i: true, c: "#4f81bd", s: 18 },
  { name: "הדגשה עד...", i: true, c: "#808080" },
  { name: "הדגשה", i: true },
  { name: "הדגשה חז...", i: true, b: true, c: "#4f81bd" },
  { name: "חזק", b: true, text: "אאבבגגד" },
];
const paragraphs = [
  ["אמילי השתעלה שוב וקטיה מהרה לצאת מהחדר ולרדת במדרגות אל הסלון הגדול."],
  ["הסלון היה רחב, ותמונות שמן גדולות עטרו את קירותיו. שתי ספות בגוון הבורדו קבועות היו בפינתו,", "ושולחן תה קטן עמד ביניהן."],
  ["הלנה וריצ'רד הרברט ישובים היו על הספות, כשריצ'רד מעיין בעיתון היומי והלנה מביטה בתמונת", "השמן שמולה בחוסר עניין. התה המונח לפניהם בשלישית ספלי חרסינה הלך והתקרר."],
  ["\"הו, קטיה\" פנתה הלנה למשרתת כשהבחינה בה, \"מה עם אמילי שלי? מדוע היא אינה מצטרפת", "אלינו לשתיית התה?\"."],
  ["\"היא... היא חולה, מיסיס הרברט. נראה כי היא חולה ממש\"."],
  [<>"חולה ממש? <u>הואו,</u> לא" הלנה קמה מן הספה, הרימה את שולי שמלתה ופסעה לעבר גרם המדרגות:</>, "\"אלך אליה כעת. ואת, קטיה, מהרי נא לקרוא לרופא\"."],
  ["\"בוודאי, מיסיס הרברט\" קטיה השפילה את ראשה, אחזה בשולי חצאיתה וקדה. אחר הסתובבה", "ומהרה לצאת מהבית."],
  ["בחוץ היה קר קטיה הצטמררה מהקור ומהדאגה. 'היא לא הייתה נראית כחולה בשפעת רגילה'", "הרהרה לעצמה: 'זה היה נראה כמו...' היא פחדה להזכיר את המילה אפילו במחשבתה ורק האיצה", "את מהירותה אל עבר ביתו של הרופא האזורי."],
];
const scale = [3, 2, 1, "", 1, 2, 3, 4, 5, 6, 7, 8, 9, 10, 11, 12, 13, 14, 15, 16, 17, ""];
const full = [[0, 14], [0, 14], [0, 14], [0, 14], [0, 14]];

const Caret = ({ label }) => <CaretBtn aria-label={label}><Tri /></CaretBtn>;
const Foot = ({ children, launch = true }) => (
  <GroupFoot $launch={launch}><span>{children}</span>{launch && <Launcher />}</GroupFoot>
);

export default function App() {
  return (
    <App_ dir="rtl" lang="he">
      <Global />
      <Frame>
        <TitleBar>
          <AppIcon><SmallWord /></AppIcon>
          <Title>פרק ג&nbsp; -&nbsp; Microsoft Word (הפעלת המוצר נכשלה)</Title>
          <WindowButtons>
            <WinBtn aria-label="מזער"><Svg w={12}><path d="M0 6.500H12" stroke="#fff" /></Svg></WinBtn>
            <WinBtn aria-label="שחזר"><Svg w={12}><path d="M2.500 2.500H11.500V11.500H2.500ZM2 9.500H.5V.5H9.500V2" stroke="#fff" /></Svg></WinBtn>
            <WinBtn aria-label="סגור"><Svg w={13}><path d="M.5.5L12.500 12.500M12.500.5L.5 12.500" stroke="#fff" strokeWidth="1.200" /></Svg></WinBtn>
          </WindowButtons>
        </TitleBar>
        <TabRow>
          <FileTab>קובץ</FileTab>
          <Tab $on>בית</Tab>
          {tabs.map((t) => <Tab key={t}>{t}</Tab>)}
          <TabEnd>
            <button aria-label="מזער רצועה"><Svg w={9} h={7}><path d="M.5 6.500V4.500L4.500 .8L8.500 4.500V6.500H6.500L4.500 4.500L2.500 6.500Z" fill="#fff" stroke="#4c4c4c" /></Svg></button>
            <Help aria-label="עזרה">?</Help>
          </TabEnd>
        </TabRow>
      </Frame>

      <Ribbon>
        <Group $w={173}>
          <GroupBody $pad="3px 6px 0">
            <PasteBtn><Clipboard />הדבק<Tri /></PasteBtn>
            <Commands $pr={7}>
              <Command $off><IconBox><Scissors /></IconBox>גזור</Command>
              <Command $off><IconBox><Copy /></IconBox>העתק</Command>
              <Command><IconBox><Brush /></IconBox>מברשת עיצוב</Command>
            </Commands>
          </GroupBody>
          <Foot>לוח</Foot>
        </Group>

        <Group $w={309}>
          <GroupBody $col $pad="12px 6px 0">
            <ToolRow>
              <Combo $w={116}><select aria-label="גופן"><option>(גוף עברי) Arial</option></select><Tri /></Combo>
              <Combo $w={49} $join><select aria-label="גודל גופן"><option>11</option></select><Tri /></Combo>
              <Tool $w={29}><Glyph $s={17}>A<sup>▴</sup></Glyph></Tool>
              <Tool $w={27}><Glyph $s={14}>A<sup>▾</sup></Glyph></Tool>
              <SepBox $w={4} />
              <Tool><Glyph $s={15}>Aa</Glyph></Tool><Caret label="שינוי רישיות" />
              <SepBox $w={16} />
              <Tool $w={20} aria-label="נקה עיצוב"><ClearFmt /></Tool>
            </ToolRow>
            <ToolRow $top={9}>
              <Tool><Glyph $s={15}>B</Glyph></Tool>
              <Tool $w={27}><Glyph $s={15} $i>I</Glyph></Tool>
              <Tool><Glyph $s={15} $d="underline">U</Glyph></Tool><Caret label="קו תחתון" />
              <Gap $w={5} />
              <Tool $w={27}><Glyph $s={13} $d="line-through">abc</Glyph></Tool>
              <Tool $w={27}><Glyph $s={15}>x<sub>2</sub></Glyph></Tool>
              <Tool><Glyph $s={15}>x<sup>2</sup></Glyph></Tool>
              <SepBox $w={9} />
              <Tool><Effect $s={20} $c="#e6f3fb">A</Effect></Tool><Caret label="אפקטי טקסט" />
              <Tool><ColorBar $c="#ff0"><HiText>ab</HiText></ColorBar></Tool><Caret label="צבע סימון" />
              <Gap $w={3} />
              <Tool><ColorBar $c="#f00"><Glyph $c="#2f5597" $s={17}>A</Glyph></ColorBar></Tool><Caret label="צבע גופן" />
            </ToolRow>
          </GroupBody>
          <Foot>גופן</Foot>
        </Group>

        <Group $w={321}>
          <GroupBody $col $pad="12px 5px 0">
            <ToolRow>
              <Tool aria-label="תבליטים"><Listing mode="dots" /></Tool><Caret label="תבליטים" />
              <Gap $w={4} />
              <Tool aria-label="מספור"><Listing mode="nums" /></Tool><Caret label="מספור" />
              <Gap $w={4} />
              <Tool aria-label="רב-רמות"><Listing mode="multi" /></Tool><Caret label="רב-רמות" />
              <SepBox $w={11} />
              <Tool aria-label="הקטן כניסה"><Indent /></Tool>
              <Tool $w={26} aria-label="הגדל כניסה"><Indent out /></Tool>
              <SepBox />
              <Tool $w={27} $on aria-label="מימין לשמאל"><Dir rtl /></Tool>
              <Tool $w={27} aria-label="משמאל לימין"><Dir /></Tool>
              <SepBox />
              <Tool aria-label="מיון"><Sort /></Tool>
              <SepBox />
              <Tool aria-label="סימני פיסקה"><Pilcrow /></Tool>
            </ToolRow>
            <ToolRow $top={9}>
              <Tool $w={27} $on aria-label="יישור לימין"><Lines w={14} rows={[[0, 14], [4, 14], [0, 14], [4, 14], [0, 14]]} /></Tool>
              <Tool aria-label="מרכז"><Lines w={14} rows={[[0, 14], [2, 12], [0, 14], [2, 12], [0, 14]]} /></Tool>
              <Tool aria-label="יישור לשמאל"><Lines w={14} rows={[[0, 14], [0, 10], [0, 14], [0, 10], [0, 14]]} /></Tool>
              <Tool $w={26} aria-label="יישור לשני הצדדים"><Lines w={14} rows={full} /></Tool>
              <SepBox />
              <Tool aria-label="מרווח בין שורות"><Spacing /></Tool><Caret label="מרווח" />
              <SepBox $w={12} />
              <Tool aria-label="הצללה"><Bucket /></Tool><Caret label="הצללה" />
              <Tool aria-label="גבולות"><Borders /></Tool><Caret label="גבולות" />
            </ToolRow>
          </GroupBody>
          <Foot>פיסקה</Foot>
        </Group>

        <Group>
          <GroupBody $pad="5px 6px 0 0">
            <Gallery>
              {styles.map((s) => (
                <StyleItem key={s.name} $on={s.on}>
                  <Preview $serif={s.serif} $b={s.b} $i={s.i} $c={s.c} $s={s.s}>{s.text || sample}</Preview>
                  <StyleName>{s.name}</StyleName>
                </StyleItem>
              ))}
            </Gallery>
            <GalleryNav>
              <NavBtn $off aria-label="הקודם"><Svg w={6} h={3}><path d="M0 3L3 0L6 3Z" fill="#a9acb1" /></Svg></NavBtn>
              <NavBtn aria-label="הבא"><Tri /></NavBtn>
              <NavBtn $more aria-label="עוד"><Tri /></NavBtn>
            </GalleryNav>
            <ChangeStyles>
              <BigAA><b>A</b><b>A</b></BigAA>
              <span>שנה</span>
              <span>סגנונות <Tri /></span>
            </ChangeStyles>
          </GroupBody>
          <Foot>סגנונות</Foot>
        </Group>

        <Group $w={79}>
          <GroupBody $pad="2px 9px 0">
            <Commands>
              <Command $h={26}><IconBox><Binoculars /></IconBox>חפש <Tri /></Command>
              <Command $h={26}><IconBox><ReplaceBox>a<em>b</em><span>a<i>c</i></span></ReplaceBox></IconBox>החלף</Command>
              <Command $h={26}><IconBox><Pointer /></IconBox>בחר <Tri /></Command>
            </Commands>
          </GroupBody>
          <Foot launch={false}>עריכה</Foot>
        </Group>
        <Gap $w={66} />
      </Ribbon>
      <RibbonEdge />
      <Quick>
        <Tool $w={18} aria-label="שמור"><Floppy /></Tool>
        <Gap $w={7} />
        <Tool $w={20} aria-label="בטל"><Turn /></Tool>
        <Gap $w={2} />
        <Caret label="בטל" />
        <Gap $w={7} />
        <Tool $w={20} aria-label="חזור"><Turn flip /></Tool>
        <Gap $w={10} />
        <Tool $w={10} aria-label="התאמה אישית"><Svg w={8} h={6}><path d="M1 .5H7" stroke="#111" /><path d="M1 3H7L4 6Z" fill="#111" /></Svg></Tool>
      </Quick>

      <Work>
        <VRuler><TabPick aria-label="סוג טאב"><Svg w={20}><path d="M.5.5H19.500V19.500H.5Z" fill="#fff" stroke="#6d727a" /><path d="M13 7V13.500H6" stroke="#444" strokeWidth="2" /></Svg></TabPick></VRuler>
        <Desk>
          <RulerWrap>
            <RulerBar>
              <Ruler>
                <Scale>
                  {scale.map((n, i) => <Cm key={i}><Dot /><span>{n}</span><Dot /><Dot $bar /></Cm>)}
                </Scale>
              </Ruler>
              <Stops />
            </RulerBar>
            <Marker $top={2} $side="right: 146px;" width="12" height="26" aria-hidden="true">
              <path d="M.5.5H11.500V3L6.500 8.500V9L11.500 14.500V18H.5V14.500L5.500 9V8.500L.5 3Z" fill="#f1f2f4" stroke="#7b8088" /><path d="M.5 19H11.500V25.500H.5Z" fill="#d8dadd" stroke="#7b8088" />
            </Marker>
            <Marker $top={12} $side="left: 145px;" width="12" height="10" aria-hidden="true">
              <path d="M.5 9.500V6L6 .8L11.500 6V9.500Z" fill="#e3e5e8" stroke="#7b8088" />
            </Marker>
          </RulerWrap>
          <Page>
            {paragraphs.map((lines, i) => (
              <p key={i}>{lines.map((l, j) => <React.Fragment key={j}>{j > 0 && <br />}{l}</React.Fragment>)}</p>
            ))}
          </Page>
        </Desk>
        <Scroll>
          <Split />
          <SBtn aria-label="סרגל"><Svg w={13}><path d="M1 1.500H6L8 4L11.500 2.500V9H9V12H5V8L1 9Z" fill="#f3eef0" stroke="#70757e" /><path d="M3 4L5 6M7 7L9 9" stroke="#70757e" /></Svg></SBtn>
          <SBtn aria-label="גלול למעלה"><Svg w={11} h={6}><path d="M0 6L5.500 0L11 6Z" fill="#45474d" /></Svg></SBtn>
          <Track>
            <Space $f={378} />
            <Thumb><Svg w={8} h={8}><path d="M0 .5H8M0 2.500H8M0 4.500H8M0 6.500H8" stroke="#858a92" /></Svg></Thumb>
            <Space $f={114} />
          </Track>
          <SBtn aria-label="גלול למטה"><Svg w={11} h={6}><path d="M0 0H11L5.500 6Z" fill="#45474d" /></Svg></SBtn>
          <SBtn $flat aria-label="העמוד הקודם"><Svg w={6} h={7}><path d="M0 3L3 0L6 3ZM0 6L3 3L6 6Z" fill="#333" /></Svg></SBtn>
          <SBtn $flat aria-label="בחר אובייקט"><Svg w={8}><circle cx="4" cy="4" r="3" stroke="#5b5f66" fill="#cfd2d7" /></Svg></SBtn>
          <SBtn $flat aria-label="העמוד הבא"><Svg w={6} h={7}><path d="M0 1H6L3 4ZM0 4H6L3 7Z" fill="#333" /></Svg></SBtn>
        </Scroll>
      </Work>

      <Status>
        <Stat>עמוד: 2 מתוך 2</Stat>
        <Stat>מילים: 526</Stat>
        <Stat><Proof />עברית</Stat>
        <Views>
          <ViewBtn $on aria-label="פריסת הדפסה"><Svg w={14} h={15}><path d="M.5.5H13.500V13.500H.5Z" fill="#fff" stroke="#555" /><path d="M2 3.500H12M2 6.500H12M2 9.500H12M2 12H12" stroke="#444" strokeWidth="1.500" /></Svg></ViewBtn>
          <ViewBtn aria-label="קריאה במסך מלא"><Svg w={13} h={14}><path d="M.5 1.500L6.500 3L12.500 1.500V11.500L6.500 13L.5 11.500ZM6.500 3V13" stroke="#555" /><path d="M2 4.500H5M2 7H5M2 9.500H5M8 4.500H11M8 7H11M8 9.500H11" stroke="#555" /></Svg></ViewBtn>
          <ViewBtn aria-label="פריסת אינטרנט"><Svg w={14} h={14}><path d="M.5.5H10.500V11.500H.5Z" fill="#fff" stroke="#555" /><path d="M2 3H9M2 5.500H9M2 8H6" stroke="#555" /><circle cx="10" cy="10" r="4" fill="#3d78b5" /><path d="M8 8L11 9L9 12Z" fill="#4aa052" /></Svg></ViewBtn>
          <ViewBtn aria-label="חלוקה לרמות"><Lines w={13} c="#666" rows={[[0, 8], [4, 12], [4, 12], [6, 12]]} /></ViewBtn>
          <Gap $w={3} />
          <ViewBtn aria-label="טיוטה"><Lines w={13} c="#555" rows={[[0, 13], [0, 13], [0, 13], [0, 13]]} /></ViewBtn>
        </Views>
        <ZoomBox>
          <Round aria-label="הגדל"><Svg w={10}><path d="M5 0V10M0 5H10" stroke="#555" strokeWidth="2" /></Svg></Round>
          <Slider type="range" aria-label="מרחק מתצוגה" min="0" max="100" defaultValue="50" />
          <Round aria-label="הקטן"><Svg w={10}><path d="M0 5H10" stroke="#555" strokeWidth="2" /></Svg></Round>
          <Percent>100%</Percent>
        </ZoomBox>
      </Status>

      <Taskbar>
        <TaskBtn $w={60} aria-label="התחל"><Svg w={20}><path d="M0 3L8 2V9.500H0ZM9 1.800L20 0V9.500H9ZM0 10.500H8V18L0 17ZM9 10.500H20V20L9 18.300Z" fill="#fff" /></Svg></TaskBtn>
        <Search>
          <Svg w={20}><circle cx="12.500" cy="7.500" r="6.800" stroke="#222" strokeWidth="1.500" /><path d="M7.500 12.500L.5 19.500" stroke="#222" strokeWidth="1.700" /></Svg>
          <input type="text" aria-label="חיפוש" placeholder="הקלד כאן כדי לחפש" />
          <Svg w={76} h={30}>
            <path d="M30 0Q33 0 34 7Q36 12 43 13Q46 15 43 17Q36 18 34 23Q33 29 30 29T26 23Q24 18 17 17Q13 15 17 13Q24 12 26 7Q27 0 30 0Z" fill="#fbbf1d" />
            <path d="M58 12Q60 12 61 17Q65 18 65 20T61 22Q60 27 58 27T55 22Q51 21 51 20T55 17Q56 12 58 12Z" fill="#fbb832" />
            <path d="M6 20L8 23L11 25L8 27L6 30L3 27L0 26L3 24Z" fill="#12a5ea" />
            <circle cx="50" cy="3" r="2.800" fill="#f0692e" /><circle cx="73" cy="27" r="2.800" fill="#8cc63f" />
          </Svg>
        </Search>
        <TaskBtn $w={60} aria-label="תצוגת משימות"><Svg w={20}><path d="M.8 0V4M.8 10V19M7 0V3.500H20V0M7 19V15.500H20V19M8 5H19V14H8Z" stroke="#fff" strokeWidth="1.300" /><path d="M0 6H3V9H0Z" fill="#fff" /></Svg></TaskBtn>
        <Gap $w={4} />
        <TaskBtn $w={61} $active $run aria-label="Word"><WordLogo s={28} /></TaskBtn>
        <TaskBtn $run aria-label="סייר הקבצים">{TaskIcons.files}</TaskBtn>
        <TaskBtn aria-label="PowerPoint">{TaskIcons.ppt}</TaskBtn>
        <TaskBtn aria-label="צייר">{TaskIcons.paint}</TaskBtn>
        <TaskBtn $run aria-label="Chrome">{TaskIcons.chrome}</TaskBtn>
        <TaskBtn aria-label="עורך וידאו">{TaskIcons.video}</TaskBtn>
        <TaskBtn aria-label="מצלמה">{TaskIcons.camera}</TaskBtn>
        <TaskBtn $run aria-label="64">{TaskIcons.bug}</TaskBtn>
        <TaskBtn aria-label="מחשבון">{TaskIcons.calc}</TaskBtn>
        <Tray>
          <TrayBtn $w={80} aria-label="חדשות"><Svg w={30} h={20}><path d="M1 1H26V19H3Q1 19 1 17ZM26 4H29V17Q29 19 26 19M5 5H22" stroke="#fff" strokeWidth="2" /><path d="M5 9H13V15H5ZM16 9.500H23M16 12H23M16 15H23" stroke="#fff" strokeWidth="1.800" /></Svg></TrayBtn>
          {TrayIcons.map(([n, icon]) => <TrayBtn key={n} aria-label={n}>{icon}</TrayBtn>)}
          <TwoLine $w={47}>עבר<br />HE3</TwoLine>
          <TwoLine $w={86}>22:08<br />25/09/2023</TwoLine>
          <TrayBtn $w={67} aria-label="מרכז הפעולות"><Svg w={20} h={20}><path d="M.6 .6H19.400V15.400H13L10 18.800L7 15.400H.6Z" stroke="#fff" strokeWidth="1.200" /></Svg></TrayBtn>
          <Peek aria-label="הצג שולחן עבודה" />
        </Tray>
      </Taskbar>
    </App_>
  );
}
